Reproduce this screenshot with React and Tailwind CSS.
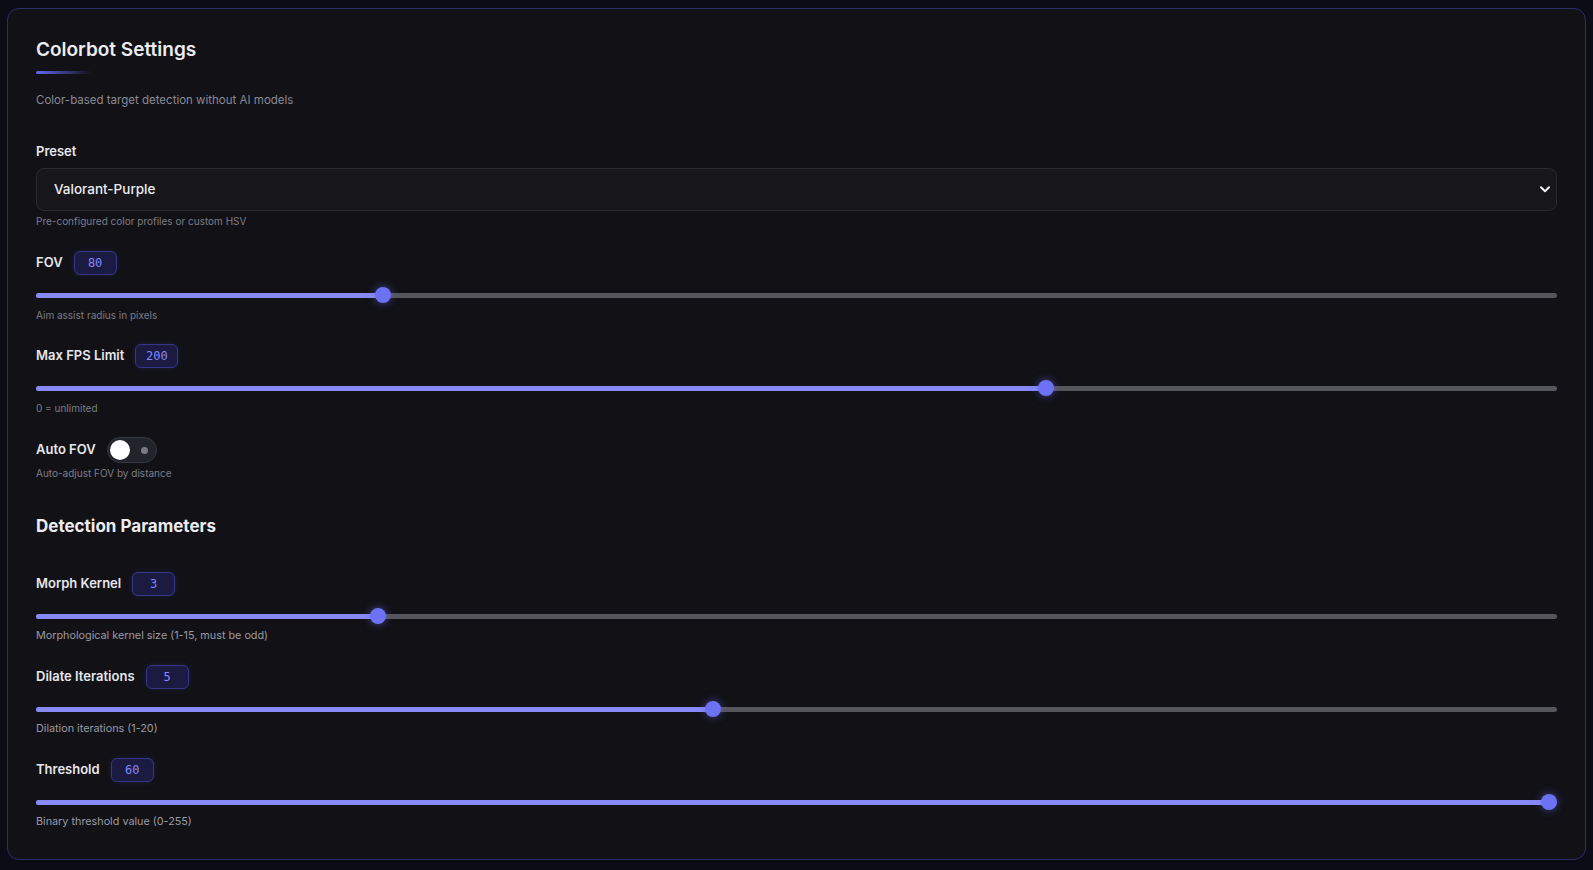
import React from "react";

const FONT = { fontFamily: "Inter, 'Noto Sans', sans-serif" };
const MONO = { fontFamily: "'DejaVu Sans Mono', 'Liberation Mono', monospace" };

const GENERAL = [
  { label: "FOV", value: "80", pct: 0.2253, hint: "Aim assist radius in pixels" },
  { label: "Max FPS Limit", value: "200", pct: 0.6661, hint: "0 = unlimited" },
];

const DETECTION = [
  { label: "Morph Kernel", value: "3", pct: 0.2219, hint: "Morphological kernel size (1-15, must be odd)" },
  { label: "Dilate Iterations", value: "5", pct: 0.4446, hint: "Dilation iterations (1-20)" },
  { label: "Threshold", value: "60", pct: 1, hint: "Binary threshold value (0-255)" },
];

const Slider = ({ pct }) => {
  // thumb center travels from 8px to width-8px, like a native range input
  const pos = `calc(8px + (100% - 16px) * ${pct})`;
  return (
    <div className="relative h-4 mt-3">
      <div className="absolute left-0 right-0 top-[5.5px] h-[5px] rounded-full bg-[#55555c]" />
      <div
        className="absolute left-0 top-[5.5px] h-[5px] rounded-full bg-[#8789f6]"
        style={{ width: pos }}
      />
      <div
        className="absolute top-0 h-4 w-4 -ml-2 rounded-full bg-[#6d71f3] shadow-[0_0_8px_rgba(109,113,243,0.55)]"
        style={{ left: pos }}
      />
    </div>
  );
};

const SliderField = ({ label, value, pct, hint, large }) => (
  <div className="mb-[21px]">
    <div className="flex items-center gap-[11px] h-6">
      <span className="text-[13px] font-semibold text-[#e6e6ec]">{label}</span>
      <span
        className="w-[43px] h-6 flex items-center justify-center rounded-md border border-[#36378a] bg-[#1b1b42] text-xs text-[#8587ff] shadow-[0_0_6px_rgba(99,102,241,0.15)]"
        style={MONO}
      >
        {value}
      </span>
    </div>
    <Slider pct={pct} />
    <p
      className={
        large
          ? "mt-1 text-[10.8px] leading-4 text-[#9b9ba5]"
          : "mt-1 text-[10px] leading-4 text-[#7d7d88]"
      }
    >
      {hint}
    </p>
  </div>
);

export default function App() {
  return (
    <div className="min-h-screen bg-[#0c0c17] px-[7px] pt-2 pb-3" style={FONT}>
      <div className="rounded-xl border border-[#2e2e66] bg-[#111116] px-7 pt-[27px] pb-[29px]">
        <h1 className="text-[19px] leading-7 font-semibold text-[#ececf1]">Colorbot Settings</h1>
        <div className="mt-[7px] h-[3px] w-14 rounded-full bg-gradient-to-r from-[#6366f1] to-transparent" />
        <p className="mt-4 mb-[31px] text-[11.5px] leading-5 text-[#8a8a95]">
          Color-based target detection without AI models
        </p>

        <div className="mb-[22px]">
          <div className="text-[13px] leading-5 font-semibold text-[#e6e6ec] mb-[7px]">Preset</div>
          <div className="h-[43px] flex items-center justify-between rounded-lg border border-[#2a2a31] bg-[#16161b] pl-[17px] pr-[5px]">
            <span className="text-[13.5px] font-medium text-[#ececf1]">Valorant-Purple</span>
            <svg width="10" height="7" viewBox="0 0 10 7" className="mr-[1px]">
              <polyline points="1,1.2 5,5.2 9,1.2" fill="none" stroke="#f2f2f5" strokeWidth="2" strokeLinecap="round" strokeLinejoin="round" />
            </svg>
          </div>
          <p className="mt-[2px] text-[10px] leading-4 text-[#7d7d88]">Pre-configured color profiles or custom HSV</p>
        </div>

        {GENERAL.map((f) => (
          <SliderField key={f.label} {...f} />
        ))}

        <div>
          <div className="flex items-center gap-[11px]">
            <span className="text-[13px] font-semibold text-[#e6e6ec]">Auto FOV</span>
            <div className="relative w-[50px] h-[26px] rounded-full border border-[#353842] bg-[#22242b]">
              <div className="absolute left-[2px] top-[2px] w-5 h-5 rounded-full bg-white" />
              <div className="absolute right-[8px] top-[8.5px] w-[7px] h-[7px] rounded-full bg-[#7a7b82]" />
            </div>
          </div>
          <p className="mt-[2px] text-[10px] leading-4 text-[#7d7d88]">Auto-adjust FOV by distance</p>
        </div>

        <h2 className="mt-[31px] mb-8 text-[17px] leading-7 font-bold text-[#ececf1]">Detection Parameters</h2>

        {DETECTION.map((f, i) => (
          <div key={f.label} className={i === DETECTION.length - 1 ? "-mb-[21px]" : ""}>
            <SliderField {...f} large />
          </div>
        ))}
      </div>
    </div>
  );
}
